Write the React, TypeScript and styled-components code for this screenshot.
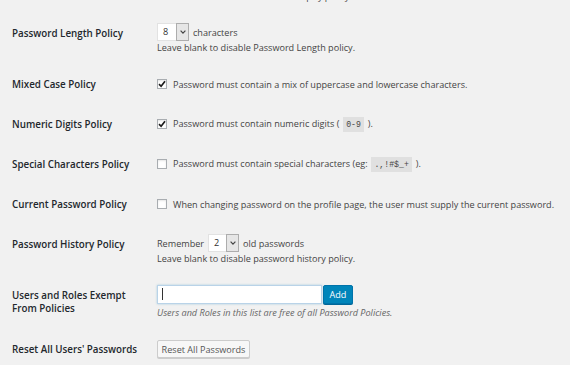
import React, { ReactElement, ReactNode } from 'react';
import styled, { createGlobalStyle } from 'styled-components';

const GlobalStyle = createGlobalStyle`
  html, body {
    margin: 0;
    padding: 0;
    background: #f1f1f1;
  }
  body {
    width: 570px;
    height: 365px;
    overflow: hidden;
    font-family: 'Open Sans', 'Liberation Sans', sans-serif;
    color: #444;
  }
`;

function Chevron(): ReactElement {
  return (
    <svg width="6" height="4" viewBox="0 0 6 4">
      <path d="M0.6 0.6 L3 3.1 L5.4 0.6" fill="none" stroke="#444" strokeWidth="1.2" />
    </svg>
  );
}

function Tick(): ReactElement {
  return (
    <svg width="8" height="8" viewBox="0 0 8 8">
      <path d="M1 4.2 L3.1 6.3 L7 1.3" fill="none" stroke="#1b1b1b" strokeWidth="1.7" />
    </svg>
  );
}

function Select({ value, width }: { value: string; width: number }): ReactElement {
  return (
    <SelectBox $width={width}>
      <SelectValue>{value}</SelectValue>
      <SelectArrow>
        <Chevron />
      </SelectArrow>
    </SelectBox>
  );
}

function Checkbox({ checked, children }: { checked?: boolean; children: ReactNode }): ReactElement {
  return (
    <CheckLine>
      <CheckBox>{checked && <Tick />}</CheckBox>
      <span>{children}</span>
    </CheckLine>
  );
}

type RowProps = { label: ReactNode; children: ReactNode };

function Row({ label, children }: RowProps): ReactElement {
  return (
    <RowBlock>
      <Label>{label}</Label>
      <Field>{children}</Field>
    </RowBlock>
  );
}

function App(): ReactElement {
  return (
    <>
      <GlobalStyle />
      <FormTable>
        <Row label="Password Expiry Policy">
          <InlineLine>
            <Select value="0" width={32} />
            <span>days</span>
          </InlineLine>
          <Description>Leave blank to disable Password Expiry policy.</Description>
        </Row>

        <Row label="Password Length Policy">
          <InlineLine>
            <Select value="8" width={32} />
            <span>characters</span>
          </InlineLine>
          <Description>Leave blank to disable Password Length policy.</Description>
        </Row>

        <Row label="Mixed Case Policy">
          <Checkbox checked>Password must contain a mix of uppercase and lowercase characters.</Checkbox>
        </Row>

        <Row label="Numeric Digits Policy">
          <Checkbox checked>
            Password must contain numeric digits ( <Code>0-9</Code> ).
          </Checkbox>
        </Row>

        <Row label="Special Characters Policy">
          <Checkbox>
            Password must contain special characters (eg: <Code>.,!#$_+</Code> ).
          </Checkbox>
        </Row>

        <Row label="Current Password Policy">
          <Checkbox>
            When changing password on the profile page, the user must supply the current password.
          </Checkbox>
        </Row>

        <Row label="Password History Policy">
          <InlineLine>
            <span>Remember</span>
            <Select value="2" width={31} />
            <span>old passwords</span>
          </InlineLine>
          <Description>Leave blank to disable password history policy.</Description>
        </Row>

        <Row label="Users and Roles Exempt From Policies">
          <InlineLine>
            <TextInput>
              <Caret />
            </TextInput>
            <PrimaryButton>Add</PrimaryButton>
          </InlineLine>
          <Description $italic>Users and Roles in this list are free of all Password Policies.</Description>
        </Row>

        <Row label="Reset All Users' Passwords">
          <SecondaryButton>Reset All Passwords</SecondaryButton>
        </Row>
      </FormTable>
    </>
  );
}

const FormTable = styled.div`
  display: flex;
  flex-direction: column;
  margin-top: -38px;
  padding-left: 12px;
`;

const RowBlock = styled.div`
  display: flex;
`;

const Label = styled.div`
  box-sizing: border-box;
  flex: 0 0 145px;
  width: 145px;
  padding: 13.5px 12px 13.5px 0;
  font-size: 9.8px;
  font-weight: 600;
  line-height: 13px;
  color: #23282d;
`;

const Field = styled.div`
  align-self: center;
  display: flex;
  flex-direction: column;
  padding: 10px 0;
  font-size: 9.1px;
  line-height: 13px;
  color: #444;
`;

const InlineLine = styled.div`
  display: flex;
  align-items: center;
  gap: 4px;
  height: 18px;
`;

const Description = styled.div<{ $italic?: boolean }>`
  margin-top: ${(p) => (p.$italic ? '3px' : '0')};
  font-style: ${(p) => (p.$italic ? 'italic' : 'normal')};
  color: ${(p) => (p.$italic ? '#666' : '#444')};
  white-space: nowrap;
`;

const SelectBox = styled.div<{ $width: number }>`
  box-sizing: border-box;
  display: flex;
  width: ${(p) => p.$width}px;
  height: 18px;
  background: #fff;
  border: 1px solid #e2e2e2;
`;

const SelectValue = styled.span`
  flex: 1;
  padding-left: 5px;
  line-height: 16px;
  color: #333;
`;

const SelectArrow = styled.span`
  box-sizing: border-box;
  display: flex;
  align-items: center;
  justify-content: center;
  width: 13px;
  margin: -1px -1px -1px 0;
  background: #e6e6e6;
  border: 1px solid #adadad;
`;

const CheckLine = styled.div`
  display: flex;
  align-items: center;
  gap: 6px;
  white-space: nowrap;
`;

const CheckBox = styled.span`
  box-sizing: border-box;
  display: flex;
  align-items: center;
  justify-content: center;
  width: 10px;
  height: 10px;
  background: #fff;
  border: 1px solid #a9adb1;
  box-shadow: inset 0 1px 2px rgba(0, 0, 0, 0.1);
`;

const Code = styled.code`
  display: inline-block;
  margin: 0 1px;
  padding: 1px 3.5px;
  background: rgba(0, 0, 0, 0.07);
  font-family: 'Liberation Mono', 'DejaVu Sans Mono', monospace;
  font-size: 8.2px;
  line-height: 13px;
  color: #444;
`;

const TextInput = styled.div`
  box-sizing: border-box;
  display: flex;
  align-items: center;
  width: 165px;
  height: 19px;
  padding-left: 4px;
  background: #fff;
  border: 1px solid #b9d3e8;
  box-shadow: 0 0 2px rgba(30, 140, 190, 0.35);
`;

const Caret = styled.span`
  width: 1px;
  height: 12px;
  background: #333;
`;

const PrimaryButton = styled.button`
  box-sizing: border-box;
  width: 30px;
  height: 19px;
  margin-left: -3px;
  padding: 0;
  font-family: inherit;
  font-size: 9.1px;
  color: #fff;
  background: #0085ba;
  border: 1px solid #0073aa;
  border-radius: 2px;
  box-shadow: 0 1px 0 #006799;
`;

const SecondaryButton = styled.button`
  box-sizing: border-box;
  width: 93px;
  height: 18px;
  padding: 0;
  font-family: inherit;
  font-size: 9.1px;
  color: #555;
  background: #f7f7f7;
  border: 1px solid #ccc;
  border-radius: 2px;
  box-shadow: 0 1px 0 #ccc;
`;

export default App;
